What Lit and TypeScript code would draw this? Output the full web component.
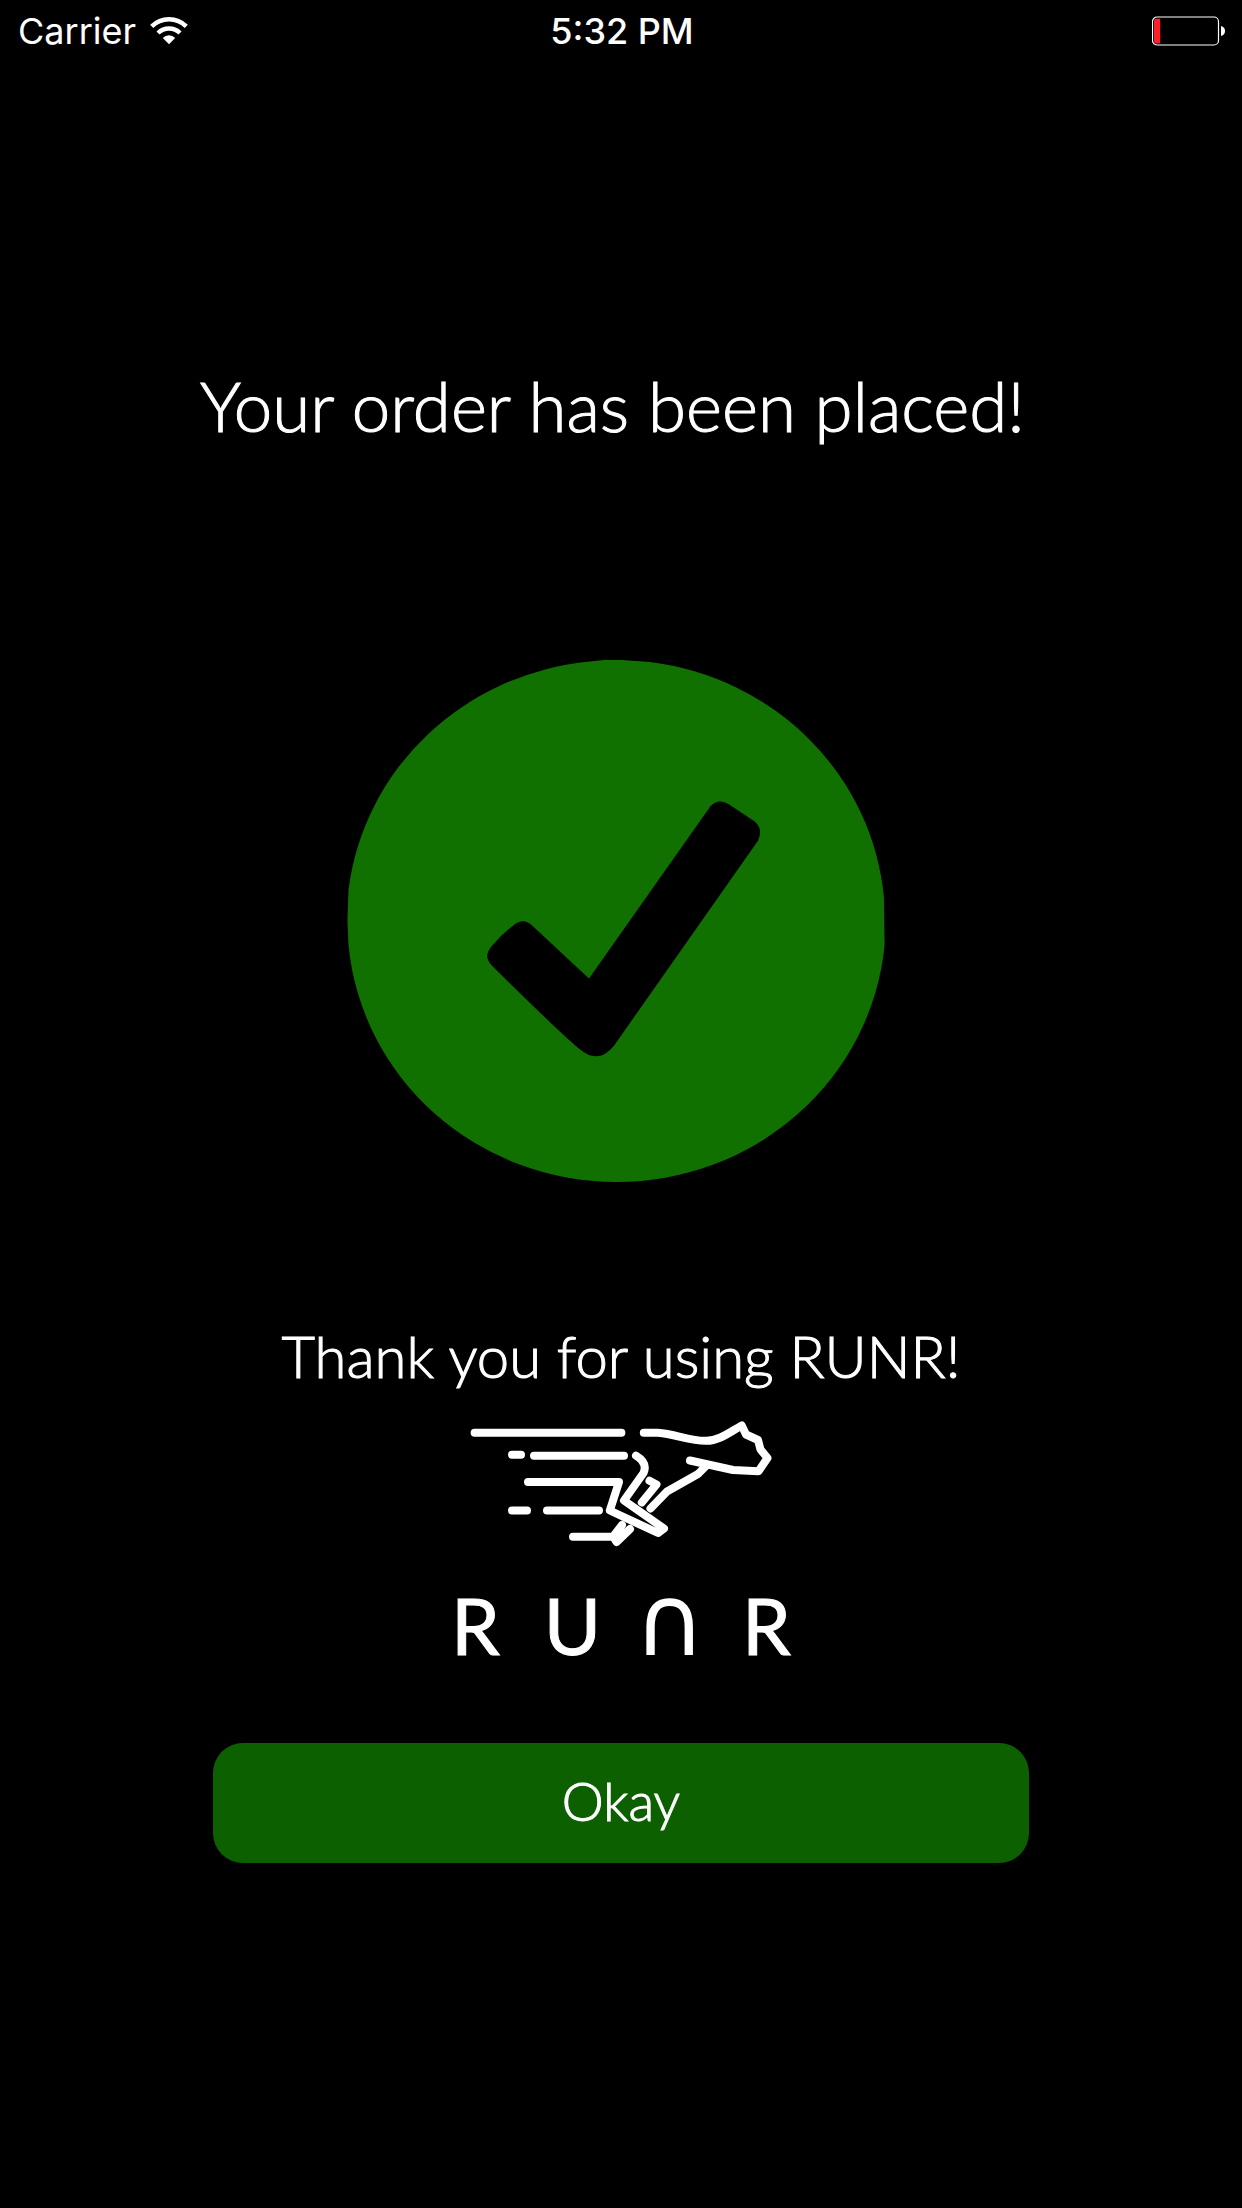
import { LitElement, html, css } from "lit";
import { customElement, property } from "lit/decorators.js";

@customElement("status-bar")
class StatusBar extends LitElement {
  @property() carrier = "";
  @property() time = "";

  static styles = css`
    :host {
      display: block;
      font-family: Inter, "Liberation Sans", sans-serif;
      font-size: 36px;
      line-height: 60px;
    }
    .bar {
      display: grid;
      grid-template-columns: 1fr auto 1fr;
      align-items: center;
      height: 62px;
      padding: 0 16px 0 18px;
    }
    .left {
      display: flex;
      align-items: center;
      gap: 14px;
    }
    .carrier {
      font-weight: 400;
    }
    .time {
      font-weight: 500;
    }
    .battery {
      justify-self: end;
    }
    svg {
      display: block;
    }
  `;

  render() {
    return html`
      <div class="bar">
        <div class="left">
          <span class="carrier">${this.carrier}</span>
          <svg width="38" height="28" viewBox="0 0 38 28" role="img" aria-label="Wi-Fi">
            <g fill="none" stroke="#fff" stroke-width="4.4">
              <path d="M1.7 9.4 A24.5 24.5 0 0 1 36.3 9.4" />
              <path d="M8 16 A15.8 15.8 0 0 1 30 16" />
            </g>
            <path d="M12.8 20.9 A8.8 8.8 0 0 1 25.2 20.9 L19 27.3 Z" fill="#fff" />
          </svg>
        </div>
        <span class="time">${this.time}</span>
        <svg class="battery" width="74" height="30" viewBox="0 0 74 30" role="img" aria-label="Battery low">
          <rect x="0.5" y="1" width="66" height="28" rx="4.5" fill="none" stroke="#fff" stroke-width="1.2" />
          <path d="M4 2.8 H8.2 V27.4 H4 Q2 27.4 2 25 V5.2 Q2 2.8 4 2.8 Z" fill="#ff1f28" />
          <path d="M69 10 Q73 11 73 15 Q73 19 69 20 Z" fill="#fff" />
        </svg>
      </div>
    `;
  }
}

@customElement("app-root")
class AppRoot extends LitElement {
  static styles = css`
    :host {
      display: block;
      min-height: 100vh;
      background: #000;
      color: #fff;
      font-family: Lato, "Open Sans", sans-serif;
      font-weight: 300;
    }
    h1,
    .thanks {
      -webkit-text-stroke: 1px #fff;
    }
    .confirmation {
      display: flex;
      flex-direction: column;
      padding: 304px 210px 0 200px;
    }
    h1 {
      margin: 0;
      font-size: 69px;
      line-height: 80px;
      font-weight: 300;
      white-space: nowrap;
    }
    .check {
      display: block;
      align-self: center;
      margin-top: 214px;
    }
    .footer {
      display: flex;
      flex-direction: column;
      align-items: center;
      padding: 138px 213px 0;
    }
    .thanks {
      margin: 0;
      font-size: 58px;
      line-height: 72px;
      white-space: nowrap;
    }
    .cheetah {
      display: block;
      margin-top: 23px;
    }
    .wordmark {
      display: grid;
      grid-template-columns: repeat(4, 97px);
      align-items: baseline;
      height: 96px;
      margin-top: 23px;
      font-size: 78px;
      line-height: 96px;
      font-weight: 400;
      text-align: center;
      -webkit-text-stroke: 1px #fff;
    }
    .arch {
      font-family: "DejaVu Sans", sans-serif;
      font-size: 98px;
      -webkit-text-stroke: 0;
    }
    .okay {
      width: 100%;
      height: 120px;
      margin-top: 74px;
      padding: 0 0 4px;
      border: 0;
      border-radius: 30px;
      background: #0d6000;
      color: #fff;
      font: inherit;
      font-size: 53px;
      line-height: 72px;
      -webkit-text-stroke: 1px #fff;
    }
  `;

  render() {
    return html`
      <status-bar carrier="Carrier" time="5:32 PM"></status-bar>
      <main>
        <section class="confirmation">
          <h1>Your order has been placed!</h1>
          <svg class="check" width="538" height="522" viewBox="347 660 538 522" role="img" aria-label="Success">
            <path
              fill="#107000"
              d="M590 661.5 L604 660 L622 660 L650 662 A269 261 0 0 1 884 898 L884.6 945 A269 261 0 0 1 616 1182 A269 261 0 0 1 348.5 945 L347.4 920 L348.5 890 A269 261 0 0 1 590 661.5 Z"
            />
            <path
              fill="#000"
              d="M710.3 806.4 Q718.5 798 728.8 804.3 L754.7 821.4 Q763.5 829 758 840.7 L614 1045.7 Q598.5 1065 579.7 1049.3 Q560 1033 492 965.7 Q482.5 956.5 492 945.7 Q502 934 514 925 Q523 917.5 531.6 925 L589 978.6 Z"
            />
          </svg>
        </section>
        <section class="footer">
          <p class="thanks">Thank you for using RUNR!</p>
          <svg class="cheetah" width="310" height="135" viewBox="466 1415 310 135" aria-hidden="true">
            <g fill="none" stroke="#fff" stroke-width="8" stroke-linecap="round" stroke-linejoin="round">
              <path d="M474.6 1432.7 H621.4 M512 1454.7 H521 M534 1455.7 H624 M512 1510.5 H527 M547 1510.5 H599" />
              <path d="M528 1482 H619 L609.8 1510.5 L658 1533 L664 1528.5 L624 1500.5 L643.5 1473 Q648 1463 636 1455.7" />
              <path d="M573 1536.8 H613 L622 1525 M613.5 1537 L616.5 1542 L630 1529" />
              <path d="M649.5 1480.8 L656.5 1484.5 L641.8 1502.5" />
              <path d="M643.8 1432.7 H658 C675 1434 690 1441 706 1440.8 C719 1441 730 1432 741.7 1425.5 L746 1434.5 L758 1440 L760.5 1449.5 L767.5 1458 L758.5 1471.2 L733 1470 L690 1460.5" />
              <path d="M706 1466 L698 1474 L667 1491.5 L650.5 1508.5" />
            </g>
          </svg>
          <div class="wordmark" role="img" aria-label="RUNR">
            <span>R</span><span>U</span><span class="arch">∩</span><span>R</span>
          </div>
          <button class="okay" type="button">Okay</button>
        </section>
      </main>
    `;
  }
}
